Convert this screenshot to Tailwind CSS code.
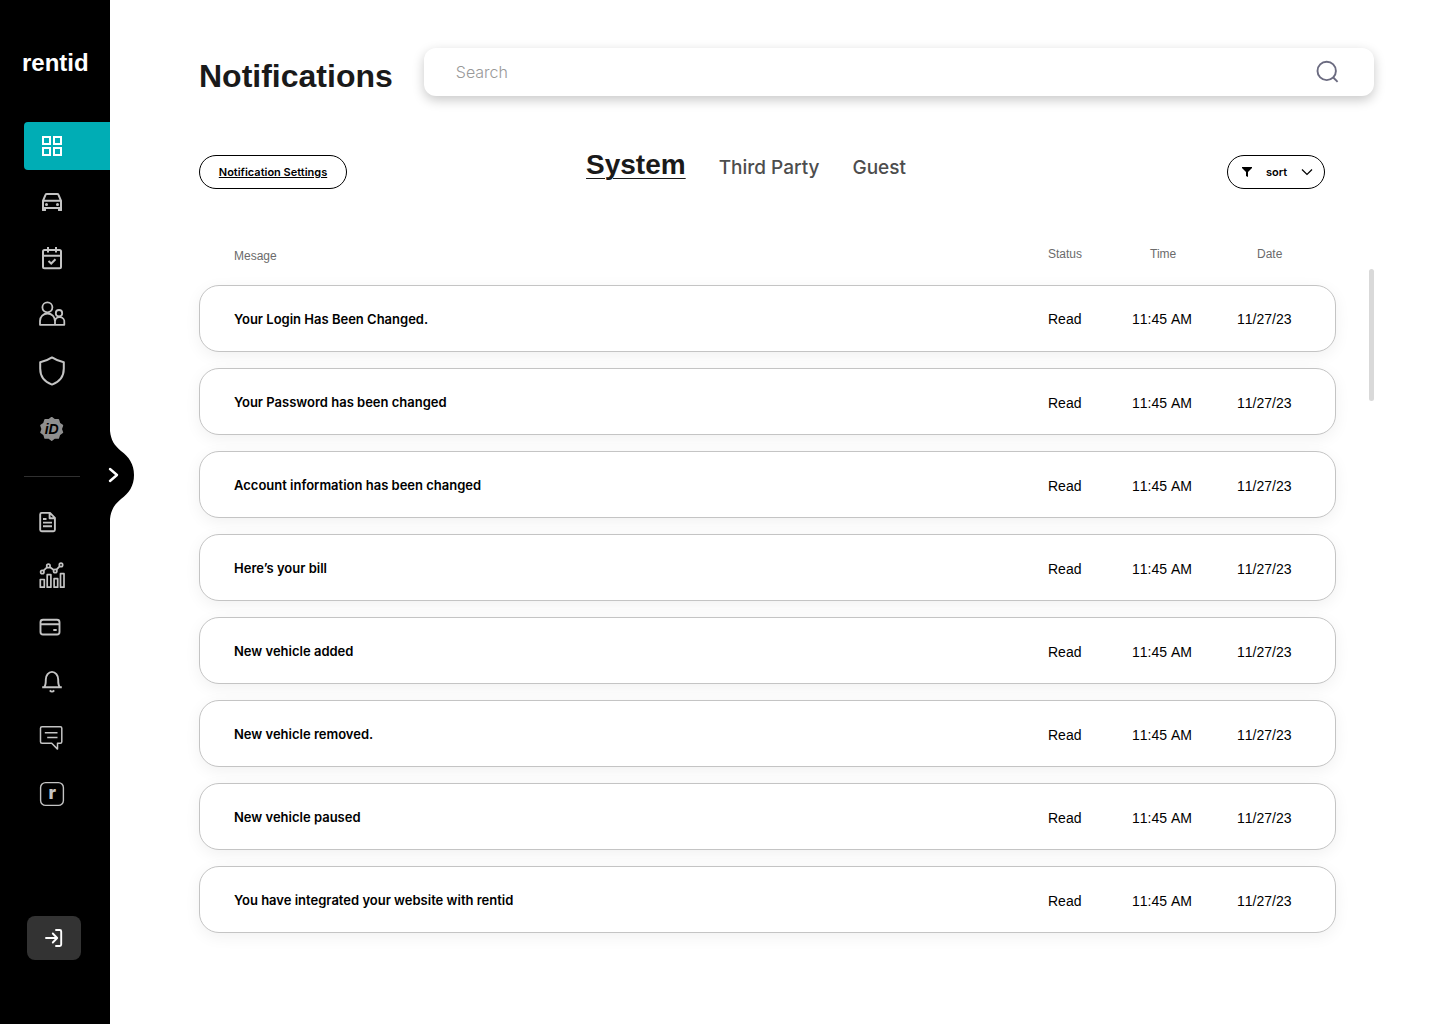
<!DOCTYPE html>
<html lang="en">
<head>
<meta charset="utf-8">
<meta name="viewport" content="width=device-width, initial-scale=1">
<title>Notifications - rentid</title>
<script src="https://cdn.jsdelivr.net/npm/@tailwindcss/browser@4"></script>
</head>
<body class="flex min-h-screen bg-white font-['Liberation_Sans',Arial,sans-serif] text-black">

<aside class="relative flex w-[110px] shrink-0 flex-col bg-black pt-12 pb-16 text-[#c4c4c4]">
  <a href="#" class="pl-[22px] text-2xl leading-[30px] font-bold text-white">rentid</a>

  <nav aria-label="Main" class="mt-11 pl-6">
    <ul class="flex flex-col gap-2 [&_a]:flex [&_a]:h-12 [&_a]:items-center [&_a]:rounded-l [&_a]:pl-3 [&_svg]:size-8">
      <li><a href="#" aria-label="Dashboard" aria-current="page" class="bg-[#00adb5] text-white">
        <svg viewBox="0 0 32 32" fill="none" stroke="currentColor" stroke-width="2"><path d="M7 7h7v7H7zM18 7h7v7h-7zM7 18h7v7H7zM18 18h7v7h-7z"/></svg></a></li>
      <li><a href="#" aria-label="Vehicles">
        <svg viewBox="0 0 32 32" fill="none" stroke="currentColor" stroke-width="2"><path d="M7 22V14.800L9.600 8.700Q9.900 7.900 10.800 7.900H21.200Q22.100 7.900 22.400 8.700L25 14.800V22zM7 14.800H25"/><path d="M6 21.500h4V24.500q0 .6-.6.6H6.700q-.7 0-.7-.6zM22 21.500h4V24.500q0 .6-.6.6H22.700q-.7 0-.7-.6z" fill="currentColor" stroke="none"/><circle cx="10.500" cy="18.400" r="1.500" fill="currentColor" stroke="none"/><circle cx="21.500" cy="18.400" r="1.500" fill="currentColor" stroke="none"/></svg></a></li>
      <li><a href="#" aria-label="Bookings">
        <svg viewBox="0 0 32 32" fill="none" stroke="currentColor" stroke-width="2"><rect x="7" y="8" width="18" height="18.200" rx="1.500"/><path d="M7 13.700h18M12 5v5.500M20 5v5.500M12.500 19l2.700 2.500 4.300-4.300"/></svg></a></li>
      <li><a href="#" aria-label="Customers">
        <svg viewBox="0 0 32 32" fill="none" stroke="currentColor" stroke-width="1.800" stroke-linejoin="round"><circle cx="11.400" cy="9.300" r="5"/><path d="M4 26.800V23a7.500 7.500 0 0 1 15 0v3.800zM19 26.800h9.300V24.500a4.600 4.600 0 0 0-9.300-1.500"/><circle cx="23" cy="15.200" r="3.200"/></svg></a></li>
      <li><a href="#" aria-label="Protection">
        <svg viewBox="0 0 32 32" fill="none" stroke="currentColor" stroke-width="2" stroke-linejoin="round"><path d="M16 3.400Q21.500 7 27.800 8.300V14.500C27.800 22 23.500 28 16 30.600 8.500 28 4.200 22 4.200 14.500V8.300Q10.500 7 16 3.400z"/></svg></a></li>
      <li><a href="#" aria-label="Rentid verification">
        <svg viewBox="0 0 32 32"><path transform="translate(15.700 18.900)" fill="#8f8f8f" stroke="#8f8f8f" stroke-width="1.600" stroke-linejoin="round" d="M0-11.200 2.900-9 6.600-9.100 7.700-5.600 10.700-3.500 9.500 0 10.700 3.500 7.700 5.600 6.600 9.100 2.900 9 0 11.200-2.900 9-6.600 9.100-7.700 5.600-10.700 3.500-9.500 0-10.700-3.500-7.700-5.600-6.600-9.100-2.900-9z"/><text x="15.700" y="23.800" text-anchor="middle" font-size="14" font-weight="700" font-style="italic" fill="#000">iD</text></svg></a></li>
    </ul>
    <hr class="mt-[26px] w-14 border-[#303030]">
    <ul class="mt-[18px] [&_a]:flex [&_a]:h-[54px] [&_a]:items-center [&_a]:pl-3 [&_svg]:size-8">
      <li><a href="#" aria-label="Documents">
        <svg viewBox="0 0 32 32" fill="none" stroke="currentColor" stroke-width="1.900" stroke-linejoin="round"><path d="M5.700 6.900h8.300l4.900 4.900v12q0 1.500-1.500 1.500H5.700q-1.500 0-1.500-1.500V8.400q0-1.500 1.500-1.500zM13.600 7v5.200h5.200M7 13h3.500M7 16.600h9M7 20.200h9"/></svg></a></li>
      <li><a href="#" aria-label="Analytics">
        <svg viewBox="0 0 32 32" fill="none" stroke="currentColor" stroke-width="1.700" stroke-linejoin="round"><path d="M4.300 19.500h4v7.700h-4zM11.200 14.700h3.700v12.500h-3.700zM18.100 18.700h3.600v8.500h-3.600zM24.500 13.700H28v13.500h-3.500zM7.500 10.700l3.700-3.600M13.700 7l4.200 3M20.500 9.600l3.300-3.400"/><circle cx="6.300" cy="12" r="1.700"/><circle cx="12.400" cy="5.900" r="1.700"/><circle cx="19.200" cy="11" r="1.700"/><circle cx="25" cy="4.900" r="1.700"/></svg></a></li>
      <li><a href="#" aria-label="Payments">
        <svg viewBox="0 0 32 32" fill="none" stroke="currentColor" stroke-width="1.900"><rect x="4.500" y="5.700" width="19" height="14.800" rx="2.500"/><path d="M4.500 10.200h19M17.300 16h3.400"/></svg></a></li>
      <li><a href="#" aria-label="Notifications">
        <svg viewBox="0 0 32 32" fill="none" stroke="currentColor" stroke-width="1.900" stroke-linejoin="round"><path d="M6.200 19.200h19.600M8.300 19c1.600-2 1.500-4.300 1.500-7.500a6.200 7.600 0 0 1 12.400 0c0 3.200-.1 5.500 1.500 7.500M13.800 22.300q2.200 2.600 4.400 0"/></svg></a></li>
      <li><a href="#" aria-label="Messages">
        <svg viewBox="0 0 32 32" fill="none" stroke="currentColor" stroke-width="1.500" stroke-linejoin="round"><path d="M6 4.700h18.300q1.500 0 1.500 1.500V19.800q0 1.500-1.500 1.500H21.500v5.800l-5.800-5.800H6q-1.500 0-1.500-1.500V6.200Q4.500 4.700 6 4.700zM8.800 10.700h12.700M11.200 15.600h10.300"/></svg></a></li>
      <li><a href="#" aria-label="Rentid website">
        <svg viewBox="0 0 32 32"><rect x="4.600" y="6.600" width="22.800" height="22.800" rx="5" fill="none" stroke="currentColor" stroke-width="1.400"/><text x="16.200" y="23" text-anchor="middle" font-size="18" font-weight="800" font-family="Inter, sans-serif" fill="currentColor">r</text></svg></a></li>
    </ul>
  </nav>

  <button type="button" aria-label="Log out" class="mt-auto ml-[27px] flex h-11 w-[54px] items-center justify-center rounded-lg bg-[#333] text-white">
    <svg class="size-6" viewBox="0 0 24 24" fill="none" stroke="currentColor" stroke-width="1.900" stroke-linecap="round" stroke-linejoin="round"><path d="M4 12h11M10.800 7.500 15.200 12l-4.400 4.500"/><path d="M14 4h3.800q1.400 0 1.400 1.400v13.200q0 1.400-1.400 1.400H14"/></svg>
  </button>

  <!-- Expand handle bulging out of the sidebar edge -->
  <button type="button" aria-label="Expand menu" class="absolute top-[431px] left-[106px]">
    <svg class="h-[88px] w-7" viewBox="0 0 28 88"><path d="M0 0H4C5 9 8 14 15 20C23 26 28 33 28 44S23 62 15 68C8 74 5 79 4 88H0z"/><path d="M4 38l7 6-7 6" fill="none" stroke="#fff" stroke-width="2.400" stroke-linecap="round" stroke-linejoin="round"/></svg>
  </button>
</aside>

<main class="min-w-0 flex-1 pt-12 pr-[66px] pb-16 pl-[89px]">
  <header class="flex items-start gap-[31px]">
    <h1 class="pt-2 text-[32px] leading-10 font-bold text-[#1a1a1a]">Notifications</h1>
    <form role="search" class="flex h-12 flex-1 items-center rounded-xl bg-white pr-[34px] pl-8 shadow-[0_4px_12px_rgba(0,0,0,0.22)]">
      <input type="search" aria-label="Search" placeholder="Search" class="min-w-0 flex-1 font-['Inter',sans-serif] text-base font-light outline-none placeholder:text-[#999]">
      <button type="submit" aria-label="Submit search" class="text-[#6b6b80]">
        <svg class="size-6" viewBox="0 0 24 24" fill="none" stroke="currentColor" stroke-width="1.900"><circle cx="10.700" cy="10.900" r="9.200"/><path d="m16.800 17 4.800 4.800"/></svg>
      </button>
    </form>
  </header>

  <div class="mt-[51px] grid grid-cols-[1fr_auto_1fr] items-start pt-2 pr-[49px]">
    <a href="#" class="flex h-[34px] w-[148px] items-center justify-center justify-self-start rounded-full border border-black font-['Inter',sans-serif] text-[11px] font-semibold underline">Notification Settings</a>
    <div role="tablist" class="flex items-baseline gap-[33px] pr-8 font-['Inter',sans-serif] text-[19px] leading-5 font-medium text-[#4d4d4d]">
      <button type="button" role="tab" aria-selected="true" class="font-['Liberation_Sans',Arial,sans-serif] text-[28px] leading-5 font-bold text-[#1a1a1a] underline decoration-1 underline-offset-4">System</button>
      <button type="button" role="tab" aria-selected="false">Third Party</button>
      <button type="button" role="tab" aria-selected="false">Guest</button>
    </div>
    <button type="button" class="flex h-[34px] w-[98px] items-center justify-between justify-self-end rounded-full border border-black pr-[11px] pl-[14px] font-['Inter',sans-serif] text-[11px] font-semibold">
      <svg class="h-3 w-[10px]" viewBox="0 0 10 12"><path d="M0 1H10V2L6 6V11L4 10V6L0 2z"/></svg>
      sort
      <svg class="h-3 w-3" viewBox="0 0 12 12" fill="none" stroke="#000" stroke-width="1.200"><path d="m1 3.500 5 5 5-5"/></svg>
    </button>
  </div>

  <div class="mt-14 flex items-start gap-[33px]">
    <table class="block min-w-0 flex-1 text-sm">
      <thead class="block">
        <tr class="grid grid-cols-[1fr_84px_105px_56px] pr-[43px] pb-[19px] pl-[35px] text-left text-xs leading-[19px] text-[#6b6b6b] [&>th]:font-normal">
          <th scope="col" class="pt-0.5">Mesage</th><th scope="col">Status</th><th scope="col" class="pl-[18px]">Time</th><th scope="col" class="pl-5">Date</th>
        </tr>
      </thead>
      <tbody class="flex flex-col gap-4 [&>tr]:grid [&>tr]:h-[67px] [&>tr]:grid-cols-[1fr_84px_105px_56px] [&>tr]:items-center [&>tr]:rounded-[20px] [&>tr]:border [&>tr]:border-[#c4c4c4] [&>tr]:bg-white [&>tr]:pr-[42px] [&>tr]:pl-[34px] [&>tr]:shadow-[0_4px_16px_rgba(0,0,0,0.06)] [&_td]:whitespace-nowrap [&_td]:[font-kerning:none] [&>tr+tr>td]:pt-[3px] [&_th]:pt-px [&_th]:text-left [&_th]:font-['Inter',sans-serif] [&_th]:text-[13px] [&_th]:font-semibold">
        <tr><th scope="row">Your Login Has Been Changed.</th><td>Read</td><td>11:45 AM</td><td>11/27/23</td></tr>
        <tr><th scope="row">Your Password has been changed</th><td>Read</td><td>11:45 AM</td><td>11/27/23</td></tr>
        <tr><th scope="row">Account information has been changed</th><td>Read</td><td>11:45 AM</td><td>11/27/23</td></tr>
        <tr><th scope="row">Here’s your bill</th><td>Read</td><td>11:45 AM</td><td>11/27/23</td></tr>
        <tr><th scope="row">New vehicle added</th><td>Read</td><td>11:45 AM</td><td>11/27/23</td></tr>
        <tr><th scope="row">New vehicle removed.</th><td>Read</td><td>11:45 AM</td><td>11/27/23</td></tr>
        <tr><th scope="row">New vehicle paused</th><td>Read</td><td>11:45 AM</td><td>11/27/23</td></tr>
        <tr><th scope="row">You have integrated your website with rentid</th><td>Read</td><td>11:45 AM</td><td>11/27/23</td></tr>
      </tbody>
    </table>
    <div aria-hidden="true" class="mt-6 h-[132px] w-[5px] shrink-0 rounded-full bg-[#d9d9d9]"></div>
  </div>
</main>
</body>
</html>
